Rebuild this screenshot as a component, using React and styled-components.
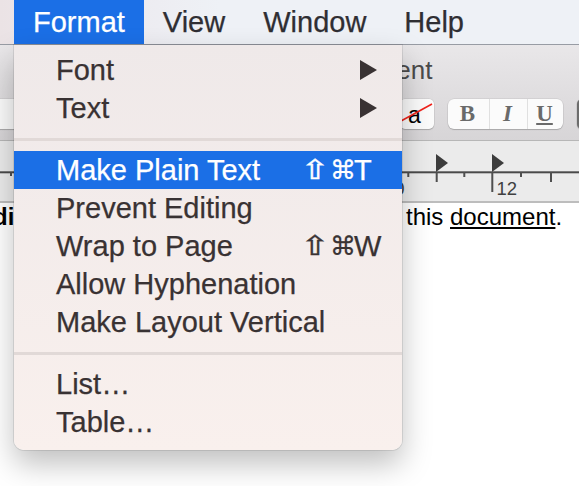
import React from "react";
import styled, { createGlobalStyle } from "styled-components";

const GlobalStyle = createGlobalStyle`
  html, body {
    margin: 0;
    padding: 0;
    background: #fff;
    overflow: hidden;
  }
  body {
    font-family: "Liberation Sans", Arial, sans-serif;
  }
`;

const menuItems = [
  { label: "Font", sub: true },
  { label: "Text", sub: true },
  { sep: true },
  { label: "Make Plain Text", keys: "T", active: true },
  { label: "Prevent Editing" },
  { label: "Wrap to Page", keys: "W" },
  { label: "Allow Hyphenation" },
  { label: "Make Layout Vertical" },
  { sep: true },
  { label: "List…" },
  { label: "Table…" },
];

// ruler ticks: x position and length below the baseline
const ticks = [
  { x: 11, h: 4 },
  { x: 380.7, h: 20 },
  { x: 408.3, h: 5 },
  { x: 436.7, h: 10 },
  { x: 464.3, h: 5 },
  { x: 492.3, h: 20 },
  { x: 521, h: 5 },
  { x: 551, h: 10 },
];

function App() {
  return (
    <Screen>
      <GlobalStyle />
      <MenuBar>
        <BarItem $active>Format</BarItem>
        <BarItem>View</BarItem>
        <BarItem>Window</BarItem>
        <BarItem>Help</BarItem>
      </MenuBar>

      <Chrome>
        <TitleRow>Document</TitleRow>
        <Toolbar>
          <ToolButton $w={200} />
          <ToolButton $w={192} />
          <ToolButton $w={34}>
            <StrikeA>a</StrikeA>
            <StrikeLine viewBox="0 0 34 30" width="34" height="30">
              <line x1="1" y1="22" x2="32" y2="5" stroke="#f0231c" strokeWidth="1.6" />
            </StrikeLine>
          </ToolButton>
          <Segmented>
            <Segment $w={41}>B</Segment>
            <Segment $w={38} $italic>I</Segment>
            <Segment $w={36} $underline>U</Segment>
          </Segmented>
          <ToolButton $w={60} $dark />
        </Toolbar>
      </Chrome>

      <Ruler>
        <svg width="579" height="60">
          <rect x="0" y="30.3" width="579" height="2" fill="#4a4a4a" />
          {ticks.map((t) => (
            <rect key={t.x} x={t.x - 1} y="31" width="2" height={t.h} fill="#4f4f4f" />
          ))}
          <polygon points="436,13 448,22 436,31" fill="#3c3c3c" />
          <polygon points="492,13 504,22 492,31" fill="#3c3c3c" />
          <text x="384" y="54" fontSize="18.5" fill="#404040" fontFamily="Liberation Sans, Arial, sans-serif">10</text>
          <text x="496.5" y="54" fontSize="18.5" fill="#404040" fontFamily="Liberation Sans, Arial, sans-serif">12</text>
        </svg>
      </Ruler>

      <Doc>
        <DocLine>
          <span>
            <Bold>di</Bold>t the text of
          </span>
          <span>
            this <Link>document</Link>.
          </span>
        </DocLine>
      </Doc>

      <Dropdown>
        {menuItems.map((it, i) =>
          it.sep ? (
            <Separator key={i} />
          ) : (
            <Item key={i} $active={it.active}>
              <span>{it.label}</span>
              {it.keys ? (
                <Shortcut>
                  <ShiftGlyph>⇧</ShiftGlyph>
                  <CmdGlyph>⌘</CmdGlyph>
                  <KeyLetter>{it.keys}</KeyLetter>
                </Shortcut>
              ) : it.sub ? (
                <SubArrow viewBox="0 0 17 20" width="17" height="20">
                  <polygon points="0,0 17,10 0,20" fill="currentColor" />
                </SubArrow>
              ) : (
                <span />
              )}
            </Item>
          )
        )}
      </Dropdown>
    </Screen>
  );
}

const Screen = styled.div`
  position: relative;
  width: 579px;
  height: 486px;
  overflow: hidden;
  background: #fff;
`;

const MenuBar = styled.div`
  display: flex;
  height: 44px;
  padding-left: 14px;
  border-bottom: 1px solid #989ca4;
  background: linear-gradient(90deg, #ebe3e5 0px, #ece8ed 80px, #eef1f6 220px, #eef1f6 100%);
`;

const BarItem = styled.div`
  padding: 0 19px;
  line-height: 44px;
  font-size: 29px;
  -webkit-text-stroke: 0.25px currentColor;
  color: ${(p) => (p.$active ? "#fff" : "#2f2e33")};
  background: ${(p) => (p.$active ? "#1b6fe6" : "transparent")};
`;

const Chrome = styled.div`
  background: linear-gradient(#e9e7e9, #d7d5d7);
  border-bottom: 1px solid #b7b7b7;
  padding-bottom: 11px;
`;

const TitleRow = styled.div`
  height: 50px;
  line-height: 50px;
  padding-left: 314px;
  font-size: 26px;
  color: #4b4b4b;
  white-space: nowrap;
`;

const Toolbar = styled.div`
  display: flex;
  gap: 14px;
  height: 30px;
  margin-top: 4px;
  margin-left: -20px;
`;

const ToolButton = styled.div`
  position: relative;
  flex: none;
  width: ${(p) => p.$w}px;
  height: 30px;
  border-radius: 5px;
  background: ${(p) => (p.$dark ? "#6c6c6c" : "#fbfbfb")};
  box-shadow: 0 1px 1px rgba(0, 0, 0, 0.18), 0 0 0 0.5px rgba(0, 0, 0, 0.1);
  display: flex;
  align-items: center;
  justify-content: center;
`;

const StrikeA = styled.span`
  font-size: 23px;
  color: #000;
  margin-right: 5px;
  margin-top: 2px;
`;

const StrikeLine = styled.svg`
  position: absolute;
  left: 0;
  top: 0;
`;

const Segmented = styled.div`
  display: flex;
  flex: none;
  height: 30px;
  border-radius: 6px;
  background: #fbfbfb;
  box-shadow: 0 1px 1px rgba(0, 0, 0, 0.18), 0 0 0 0.5px rgba(0, 0, 0, 0.1);
`;

const Segment = styled.div`
  width: ${(p) => p.$w}px;
  display: flex;
  align-items: center;
  justify-content: center;
  padding-right: 2px;
  box-sizing: border-box;
  border-left: 1px solid #e0e0e0;
  &:first-child {
    border-left: none;
  }
  font-family: "Liberation Serif", "Times New Roman", serif;
  font-weight: bold;
  font-size: 23px;
  color: #6a6a6a;
  font-style: ${(p) => (p.$italic ? "italic" : "normal")};
  text-decoration: ${(p) => (p.$underline ? "underline" : "none")};
`;

const Ruler = styled.div`
  height: 60px;
  background: #ebebeb;
  border-bottom: 2px solid #bdbdbd;
  svg {
    display: block;
  }
`;

const Doc = styled.div`
  font-size: 24px;
  line-height: 28px;
  color: #000;
  white-space: nowrap;
`;

const DocLine = styled.div`
  display: grid;
  grid-template-columns: 406px auto;
  > span:first-child {
    margin-left: -7px;
    overflow: hidden;
  }
`;

const Bold = styled.b`
  font-weight: bold;
`;

const Link = styled.span`
  text-decoration: underline;
`;

const Dropdown = styled.div`
  position: absolute;
  left: 14px;
  top: 45px;
  width: 388px;
  padding: 6px 0 9px;
  background: linear-gradient(#efe9e9, #f9f0ed);
  border-radius: 0 0 10px 10px;
  box-shadow: 0 14px 30px rgba(0, 0, 0, 0.25), 0 0 0 1px rgba(0, 0, 0, 0.09);
`;

const Item = styled.div`
  display: grid;
  grid-template-columns: 1fr 98px;
  align-items: center;
  height: 38px;
  padding-left: 42px;
  font-size: 29px;
  line-height: 38px;
  white-space: nowrap;
  -webkit-text-stroke: 0.25px currentColor;
  color: ${(p) => (p.$active ? "#fff" : "#393233")};
  background: ${(p) => (p.$active ? "#1b6fe6" : "transparent")};
`;

const Separator = styled.div`
  height: 24px;
  display: flex;
  align-items: center;
  &::before {
    content: "";
    flex: 1;
    height: 3px;
    background: #e1d9d7;
  }
`;

const Shortcut = styled.div`
  display: flex;
  align-items: center;
  margin-left: -2px;
`;

const ShiftGlyph = styled.span`
  display: inline-block;
  width: 26px;
  text-align: center;
  font-family: "DejaVu Sans", sans-serif;
  font-size: 24px;
  -webkit-text-stroke: 0.4px currentColor;
  transform: scale(1.45, 1.12);
`;

const CmdGlyph = styled.span`
  display: inline-block;
  width: 22px;
  margin-left: 2px;
  text-align: center;
  font-family: "DejaVu Sans", sans-serif;
  font-size: 26px;
`;

const KeyLetter = styled.span`
  margin-left: 2px;
`;

const SubArrow = styled.svg`
  justify-self: end;
  margin-right: 25px;
`;

export default App;
